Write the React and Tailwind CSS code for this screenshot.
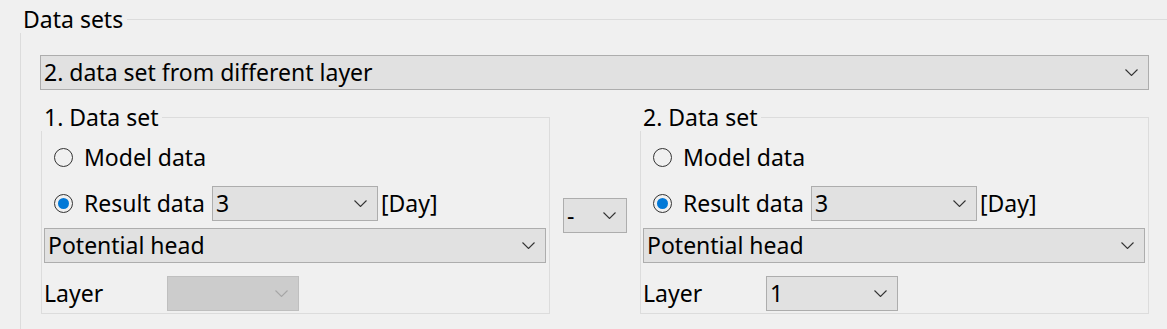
import React from 'react';

// Little "v" arrow used in every dropdown
function Chevron({ disabled }) {
  return (
    <svg width="13" height="7" viewBox="0 0 13 7" className="shrink-0">
      <path
        d="M0.5 0.5 L6.5 6.5 L12.5 0.5"
        fill="none"
        stroke={disabled ? '#a6a6a6' : '#333333'}
        strokeWidth="1.1"
      />
    </svg>
  );
}

function Combo({ value, disabled, className = '' }) {
  return (
    <div
      className={`flex h-[35px] shrink-0 items-center justify-between border pl-[3px] pr-[10px] ${
        disabled ? 'border-[#bfbfbf] bg-[#cccccc]' : 'border-[#adadad] bg-[#e1e1e1]'
      } ${className}`}
    >
      <span className="whitespace-nowrap leading-none">{value}</span>
      <Chevron disabled={disabled} />
    </div>
  );
}

function Radio({ checked, label, className = '' }) {
  return (
    <div className={`flex items-center ${className}`}>
      <span className="flex h-[19px] w-[19px] shrink-0 items-center justify-center rounded-full border border-[#333333]">
        {checked && <span className="h-[11px] w-[11px] rounded-full bg-[#0078d7]" />}
      </span>
      <span className="ml-[11px] w-[128px] whitespace-nowrap">{label}</span>
    </div>
  );
}

// the caption sits over the top-left corner of the frame, like a WinForms GroupBox
function GroupLabel({ children }) {
  return (
    <div className="-mt-[15px] -ml-px h-[28px] self-start whitespace-nowrap bg-[#f0f0f0] pl-[3px] pr-[4px] leading-[28px]">
      {children}
    </div>
  );
}

function DataSet({ title, layer }) {
  return (
    <div className="flex h-[197px] w-[509px] shrink-0 flex-col border border-[#dcdcdc]">
      <GroupLabel>{title}</GroupLabel>
      <Radio label="Model data" className="mt-[12px] ml-[12px] h-[28px]" />
      <div className="mt-[15px] ml-[12px] flex h-[35px] items-center">
        <Radio checked label="Result data" />
        <Combo value="3" className="w-[166px]" />
        <span className="ml-[3px]">[Day]</span>
      </div>
      <Combo value="Potential head" className="mt-[7px] ml-[2px] w-[502px]" />
      <div className="mt-[13px] flex items-center">
        <span className="ml-[2px] w-[123px]">Layer</span>
        <Combo value={layer} disabled={!layer} className="w-[132px]" />
      </div>
    </div>
  );
}

export default function App() {
  return (
    <div className="h-[329px] w-[1167px] overflow-hidden bg-[#f0f0f0] pt-[19px] pl-[20px] font-['Noto_Sans',sans-serif] text-[23px] text-black">
      <div className="flex h-[400px] w-[1200px] flex-col border border-[#dcdcdc]">
        <GroupLabel>Data sets</GroupLabel>
        <Combo value="2. data set from different layer" className="mt-[22px] ml-[19px] w-[1109px]" />

        <div className="mt-[27px] ml-[20px] flex items-start">
          <DataSet title="1. Data set" />
          <Combo value="-" className="mt-[81px] ml-[13px] w-[64px]" />
          <div className="ml-[13px]">
            <DataSet title="2. Data set" layer="1" />
          </div>
        </div>
      </div>
    </div>
  );
}
